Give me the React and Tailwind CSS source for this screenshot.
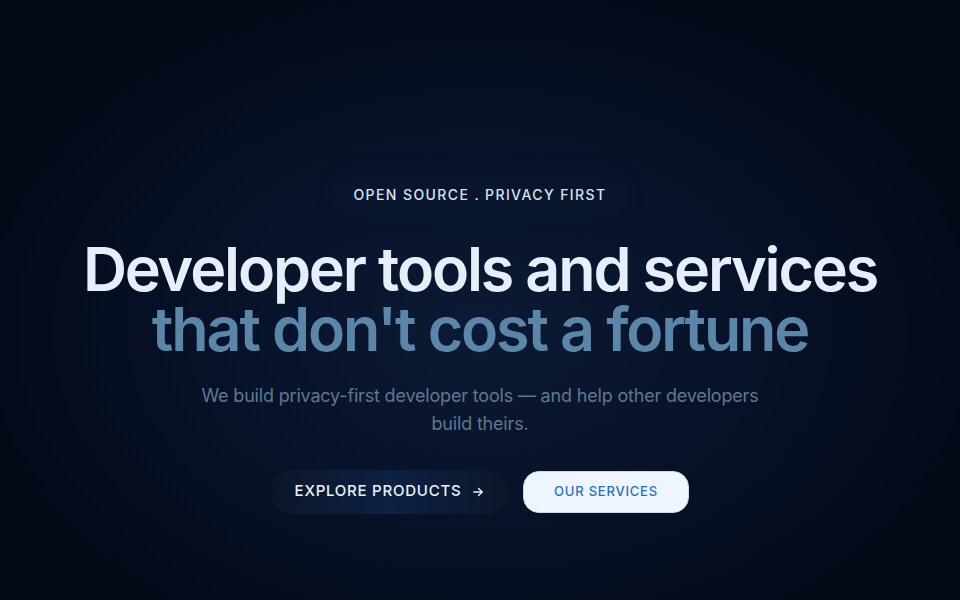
export default function App() {
  return (
    <div
      className="w-full h-[600px] flex flex-col items-center justify-center pt-[97px] bg-[#040a18] bg-[radial-gradient(ellipse_at_50%_55%,#0b1a33_0%,#071228_40%,#040a18_75%)]"
      style={{ fontFamily: "Inter, 'Noto Sans', sans-serif" }}
    >
      <div className="px-5 py-[10px] rounded-full bg-[#0a1a33]/40 shadow-[0_0_20px_rgba(20,50,100,0.15)] mt-[-12px]">
        <span className="text-[14px] font-medium tracking-[0.1em] text-[#d6e3f2]">
          OPEN SOURCE . PRIVACY FIRST
        </span>
      </div>
      <h1 className="mt-[23px] text-center text-[61px] leading-[60px] font-semibold tracking-[-0.035em]">
        <span className="block text-[#e6eef9]">Developer tools and services</span>
        <span className="block text-[#5a86a8]">that don't cost a fortune</span>
      </h1>
      <p className="mt-[23px] max-w-[580px] text-center text-[18px] leading-[28px] text-[#60778f] tracking-[-0.01em]">
        We build privacy-first developer tools — and help other developers build theirs.
      </p>
      <div className="mt-[32px] flex items-center gap-[14px]">
        <button className="h-[44px] w-[238px] rounded-full bg-[linear-gradient(90deg,#0b1629,#0d2142_50%,#0b1629)] flex items-center justify-center gap-[10px] text-[15px] font-medium tracking-[0.05em] text-[#eef3fa]">
          EXPLORE PRODUCTS
          <svg width="14" height="14" viewBox="0 0 24 24" fill="none" stroke="currentColor" strokeWidth="2.4" strokeLinecap="round" strokeLinejoin="round">
            <path d="M5 12h14" />
            <path d="M13 6l6 6-6 6" />
          </svg>
        </button>
        <button className="h-[42px] w-[166px] rounded-[16px] bg-[#eff5fc] border border-[#c9d9ea] flex items-center justify-center text-[13px] font-medium tracking-[0.06em] text-[#1f72c4]">
          OUR SERVICES
        </button>
      </div>
    </div>
  );
}
